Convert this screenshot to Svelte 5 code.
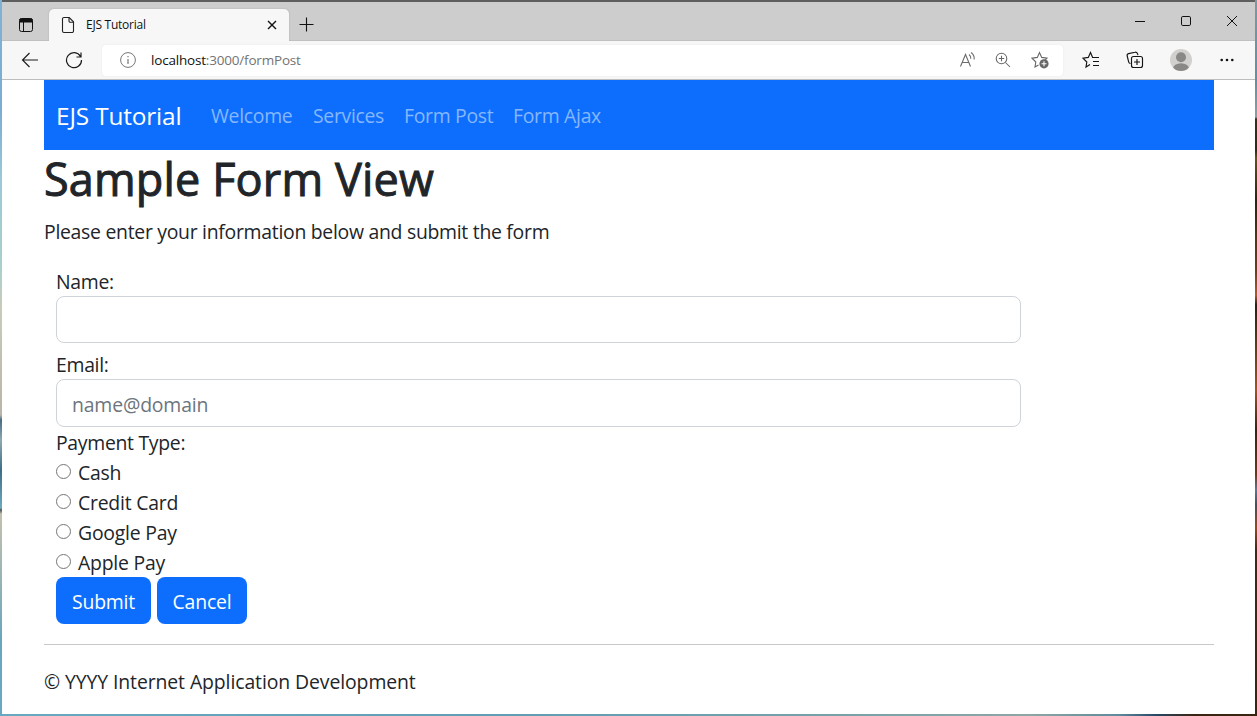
<script>
  const links = [
    { label: 'Welcome', width: 82 },
    { label: 'Services', width: 71 },
    { label: 'Form Post', width: 89 },
    { label: 'Form Ajax', width: 89 }
  ];
  const payments = ['Cash', 'Credit Card', 'Google Pay', 'Apple Pay'];
  let payment = $state('');
</script>

<div class="desktop">
  <div class="window">
    <header class="titlebar">
      <svg class="tab-actions" width="16" height="16" viewBox="0 0 16 16" fill="none" stroke="#111">
        <rect x="1.5" y="1.5" width="13" height="13" rx="2" />
        <path d="M2 2h12v3H2z" fill="#111" />
        <path d="M5.5 5v9" />
      </svg>
      <div class="tab">
        <svg width="14" height="18" viewBox="0 0 14 18" fill="none" stroke="#222" stroke-width="1.1">
          <path d="M3 1.5h5.2l4.3 4.3V15a1.5 1.5 0 0 1-1.5 1.5H3A1.5 1.5 0 0 1 1.5 15V3A1.5 1.5 0 0 1 3 1.5z" />
          <path d="M8 1.5V5a1.2 1.2 0 0 0 1.2 1.2h3.3" />
        </svg>
        <span class="tab-title">EJS Tutorial</span>
        <svg width="10" height="10" viewBox="0 0 10 10" stroke="#111" stroke-width="1.4">
          <path d="M1 1l8 8M9 1L1 9" />
        </svg>
      </div>
      <svg class="new-tab" width="15" height="15" viewBox="0 0 15 15" stroke="#111" stroke-width="1.1">
        <path d="M.5 7.5h14M7.5.5v14" />
      </svg>
      <div class="controls">
        <svg width="12" height="12" viewBox="0 0 12 12" stroke="#111"><path d="M1 6.5h10" /></svg>
        <svg width="12" height="12" viewBox="0 0 12 12" stroke="#111" fill="none"><rect x="1.5" y="1.5" width="9" height="9" rx="1.3" /></svg>
        <svg width="12" height="12" viewBox="0 0 12 12" stroke="#111"><path d="M1 1l10 10M11 1L1 11" /></svg>
      </div>
    </header>

    <div class="toolbar">
      <svg class="back" width="18" height="16" viewBox="0 0 18 16" fill="none" stroke="#1c1c1c" stroke-width="1.15">
        <path d="M17 8H1.5M8.5 1L1.5 8l7 7" />
      </svg>
      <svg class="reload" width="18" height="18" viewBox="0 0 18 18" fill="none" stroke="#1c1c1c" stroke-width="1.2">
        <path d="M15.500 5.400A7.500 7.500 0 1 0 16.500 9M16 1.500v4.500h-4.500" />
      </svg>
      <div class="address">
        <svg width="16" height="16" viewBox="0 0 16 16" fill="none" stroke="#767676">
          <circle cx="8" cy="8" r="7.400" />
          <path d="M8 7v5M8 4v1.300" stroke-width="1.2" />
        </svg>
        <span class="url"><b>localhost</b>:3000/formPost</span>
        <svg class="read" width="18" height="18" viewBox="0 0 18 18" fill="none" stroke="#6c6c6c" stroke-width="1.100">
          <path d="M1.500 15.500L6.500 3.500l5 12M3.300 11.500h6.400M10 3.500q2 1.500 1.800 4.300M12 1.500q3.600 2.500 3.200 7" />
        </svg>
        <svg class="zoom" width="16" height="16" viewBox="0 0 16 16" fill="none" stroke="#666" stroke-width="1.05">
          <circle cx="6.500" cy="6.500" r="5.300" />
          <path d="M10.500 10.500l4.500 4.500M3.800 6.500h5.400M6.500 3.800v5.400" />
        </svg>
        <svg class="favorite" width="18" height="18" viewBox="0 0 18 18" fill="none" stroke="#666" stroke-width="1.100">
          <path d="M7.500 14L4 16l.8-5L1 7.200l5.300-.8L8.500 1.500l2.200 4.900 5.300.8-2 2" />
          <circle cx="13" cy="12.800" r="4.600" fill="#666" stroke="none" />
          <path d="M13 10.300v5M10.500 12.800h5" stroke="#fff" />
        </svg>
      </div>
      <svg class="favorites" width="18" height="18" viewBox="0 0 18 18" fill="none" stroke="#151515" stroke-width="1.15">
        <path d="M8 13.500L4 16l.8-5L1 7.200l5.300-.8L8.500 1.500l2 4.700M10 6.500h7M11 10.500h6M11 14.500h6" />
      </svg>
      <svg class="collections" width="18" height="18" viewBox="0 0 18 18" fill="none" stroke="#151515" stroke-width="1.15">
        <path d="M4.500 12.500a2 2 0 0 1-1.800-1.400L1.200 5A2 2 0 0 1 2.600 2.600L9 1.200a2 2 0 0 1 2.500 1.500l.4 1.500" />
        <rect x="5.500" y="5.500" width="11" height="11" rx="2" />
        <path d="M11 8v6M8 11h6" />
      </svg>
      <svg class="avatar" width="22" height="22" viewBox="0 0 22 22">
        <defs><clipPath id="face"><circle cx="11" cy="11" r="11" /></clipPath></defs>
        <g clip-path="url(#face)">
          <rect width="22" height="22" fill="#d2d0ce" />
          <circle cx="11" cy="8.200" r="5" fill="#8a8886" />
          <ellipse cx="11" cy="19.500" rx="8" ry="5.200" fill="#8a8886" />
        </g>
      </svg>
      <svg class="more" width="14" height="4" viewBox="0 0 14 4" fill="#111">
        <circle cx="1.700" cy="2" r="1.300" /><circle cx="7" cy="2" r="1.300" /><circle cx="12.300" cy="2" r="1.300" />
      </svg>
    </div>

    <main>
      <nav>
        <a class="brand" href="#home">EJS Tutorial</a>
        {#each links as link}
          <a class="link" href="#page" style:width="{link.width}px">{link.label}</a>
        {/each}
      </nav>
      <h1>Sample Form View</h1>
      <p class="intro">Please enter your information below and submit the form</p>
      <form onsubmit={(e) => e.preventDefault()}>
        <label for="name">Name:</label>
        <input class="field" id="name" type="text" />
        <label for="email" class="email">Email:</label>
        <input class="field tall" id="email" type="text" placeholder="name@domain" />
        <div class="legend">Payment Type:</div>
        {#each payments as option}
          <label class="option">
            <input type="radio" name="payment" value={option} bind:group={payment} />
            <span>{option}</span>
          </label>
        {/each}
        <div class="actions">
          <button class="submit" type="submit">Submit</button>
          <button class="cancel" type="button">Cancel</button>
        </div>
      </form>
      <footer>© YYYY Internet Application Development</footer>
    </main>
  </div>
</div>

<style>
  :global(body) { margin: 0; overflow: hidden; }
  * { box-sizing: border-box; }
  svg { display: block; flex: none; }

  .desktop {
    width: 1257px;
    height: 716px;
    padding: 0 2px 2px;
    font-family: "Open Sans", "Noto Sans", sans-serif;
    background:
      linear-gradient(90deg, #68a9c2, #5f9eb4 40%, #76a0aa 65%, #8da6a5 82%, #608a9c 89%, #274863 92%, #3b2512 95%, #38240f) 0 100% / 100% 2px no-repeat,
      linear-gradient(#7fb2d5 0, #79add3 110px, #9bc9d6 180px, #a9cfcc 265px, #c9cbb8 310px, #b9b5a8 415px, #496d83 420px, #8fa8b0 440px, #3e6e86 470px, #6da9bf 508px, #555 510px, #c3c1ae 514px, #a5b8b2 560px, #68a6bb 640px, #68a9c2) 0 0 / 2px 100% no-repeat,
      linear-gradient(#799aa5 0, #5c91a5 80px, #88a0a4 117px, #34331a 119px, #2c2c13 150px, #62540e 158px, #29240f 200px, #54370f 240px, #6d3d13 270px, #b4591e 295px, #2c2011 305px, #64400f 350px, #a65313 390px, #38240f 430px, #6d3b12 475px, #5b7796 490px, #40505a 505px, #9c4810 528px, #3f2914 550px, #38240f) 100% 0 / 2px 100% no-repeat;
  }
  .window {
    height: 714px;
    background: #fff;
    border-top: 2px solid #5e5e5e;
  }

  .titlebar { display: flex; height: 39px; background: #cdcdcd; box-shadow: inset 0 -1px #c0c0c0; }
  .tab-actions { margin: 15px 0 0 16px; }
  .tab {
    display: flex;
    align-items: center;
    width: 240px;
    height: 32px;
    margin: 7px 0 0 15px;
    padding: 0 12px;
    background: #f7f7f7;
    border-radius: 5px 5px 0 0;
    box-shadow: 0 0 2px #aaa;
    clip-path: inset(-3px -3px 0);
  }
  .tab-title { flex: 1; margin: -1px 0 0 11px; font-size: 12px; letter-spacing: -0.25px; color: #111; }
  .new-tab { margin: 15px 0 0 10px; }
  .controls { display: flex; gap: 34px; margin: 13px 17px 0 auto; }

  .toolbar {
    display: flex;
    align-items: center;
    height: 39px;
    background: #f7f7f7;
    border-bottom: 1px solid #bdbdbd;
  }
  .back { margin-left: 19px; }
  .reload { margin-left: 26px; }
  .address {
    display: flex;
    align-items: center;
    width: 961px;
    height: 31px;
    margin-left: 19px;
    padding: 0 14px 0 18px;
    background: #fff;
    border-radius: 4px;
    box-shadow: 0 0 2px #e6e6e6;
  }
  .url { flex: 1; margin-left: 15px; font-size: 13.5px; letter-spacing: -0.19px; color: #737373; }
  .url b { font-weight: 400; color: #111; }
  .zoom { margin-left: 18px; }
  .favorite { margin-left: 20px; }
  .favorites { margin-left: 19px; }
  .collections { margin-left: 26px; }
  .avatar { margin-left: 26px; }
  .more { margin-left: 28px; }

  main {
    width: 1170px;
    margin-left: 42px;
    font-size: 19.4px;
    line-height: 30px;
    color: #212529;
  }
  nav { display: flex; align-items: center; gap: 20px; height: 70px; padding: 2px 12px 0; background: #0d6efd; }
  nav a { text-decoration: none; white-space: nowrap; }
  .brand { width: 125px; margin-right: 10px; font-size: 24.4px; letter-spacing: -0.16px; color: #fff; }
  .link { letter-spacing: -0.3px; color: #86b7fe; }
  h1 {
    height: 56px;
    margin: 0;
    padding-top: 1px;
    font-size: 45px;
    line-height: 56px;
    font-weight: 500;
    letter-spacing: 0.15px;
    white-space: nowrap;
    -webkit-text-stroke: 1px currentColor;
  }
  .intro { margin: 11px 0 20px; height: 30px; letter-spacing: -0.28px; }
  form { padding: 0 12px; }
  label, .legend { display: block; height: 30px; letter-spacing: -0.3px; }
  .field {
    display: block;
    width: 965px;
    height: 47px;
    margin-top: -1px;
    padding: 2px 15px 0;
    border: 1px solid #ced4da;
    border-radius: 8px;
    font: inherit;
    letter-spacing: -0.15px;
    color: inherit;
    outline: none;
  }
  .field.tall { height: 48px; }
  .field::placeholder { color: #6c757d; opacity: 1; }
  .email { margin-top: 7px; }
  .legend { margin-top: 1px; }
  .option { display: flex; letter-spacing: -0.22px; }
  .option input {
    appearance: none;
    width: 15px;
    height: 15px;
    margin: 6px 7px 0 0;
    border: 1px solid #767676;
    border-radius: 50%;
    background: #fff;
  }
  .option input:checked { border: 5px solid #0075ff; }
  .actions { display: flex; gap: 6px; margin-top: -1px; }
  button {
    height: 47px;
    padding: 2px 0 0;
    border: 0;
    border-radius: 8px;
    background: #0d6efd;
    color: #fff;
    font: inherit;
    letter-spacing: -0.2px;
  }
  .submit { width: 95px; }
  .cancel { width: 90px; }
  footer { margin-top: 20px; padding-top: 22px; border-top: 1px solid #c7c8c9; letter-spacing: -0.09px; }
</style>
